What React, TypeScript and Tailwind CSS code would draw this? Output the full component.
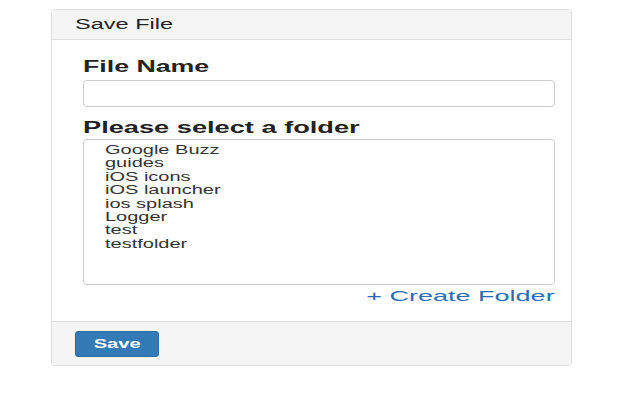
import React from "react";

const folders = [
  "Google Buzz",
  "guides",
  "iOS icons",
  "iOS launcher",
  "ios splash",
  "Logger",
  "test",
  "testfolder",
];

export default function App() {
  return (
    <div className="w-[640px] h-[400px] bg-white pt-[9px] font-['Liberation_Sans',Arial,sans-serif] text-[#222]">
      <div className="ml-[51px] w-[521px] rounded-[4px] border border-[#ddd] overflow-hidden">
        {/* header */}
        <div className="h-[30px] flex items-center pl-[23px] bg-[#f5f5f5] border-b border-[#ddd] text-[14px]">
          <span className="inline-block origin-left scale-x-[1.68]">Save File</span>
        </div>

        {/* body */}
        <div className="pl-[31px] pr-[16px] pt-[17px] pb-[15px]">
          <div className="text-[16px] font-bold leading-[20px]">
            <span className="inline-block origin-left scale-x-[1.67]">File Name</span>
          </div>
          <input
            type="text"
            className="mt-[3px] block w-full h-[27px] rounded-[4px] border border-[#ccc] bg-white outline-none"
          />
          <div className="mt-[11px] text-[16px] font-bold leading-[20px]">
            <span className="inline-block origin-left scale-x-[1.7]">Please select a folder</span>
          </div>
          <div className="mt-[1px] h-[146px] rounded-[4px] border border-[#ccc] pt-[4px] pl-[21px]">
            {folders.map((f) => (
              <div key={f} className="text-[12.5px] leading-[13.4px] text-[#333]">
                <span className="inline-block origin-left scale-x-[1.6]">{f}</span>
              </div>
            ))}
          </div>
          <div className="flex justify-end mt-[1px]">
            <span className="inline-block origin-right scale-x-[1.8] text-[15px] leading-[20px] text-[#2a6db3] cursor-pointer">
              + Create Folder
            </span>
          </div>
        </div>

        {/* footer */}
        <div className="h-[44px] bg-[#f5f5f5] border-t border-[#ddd] pl-[23px] pt-[9px]">
          <button className="h-[26px] w-[84px] rounded-[3px] bg-[#337ab7] border border-[#2e6da4] text-white text-[13px] font-bold">
            <span className="inline-block scale-x-[1.55]">Save</span>
          </button>
        </div>
      </div>
    </div>
  );
}
